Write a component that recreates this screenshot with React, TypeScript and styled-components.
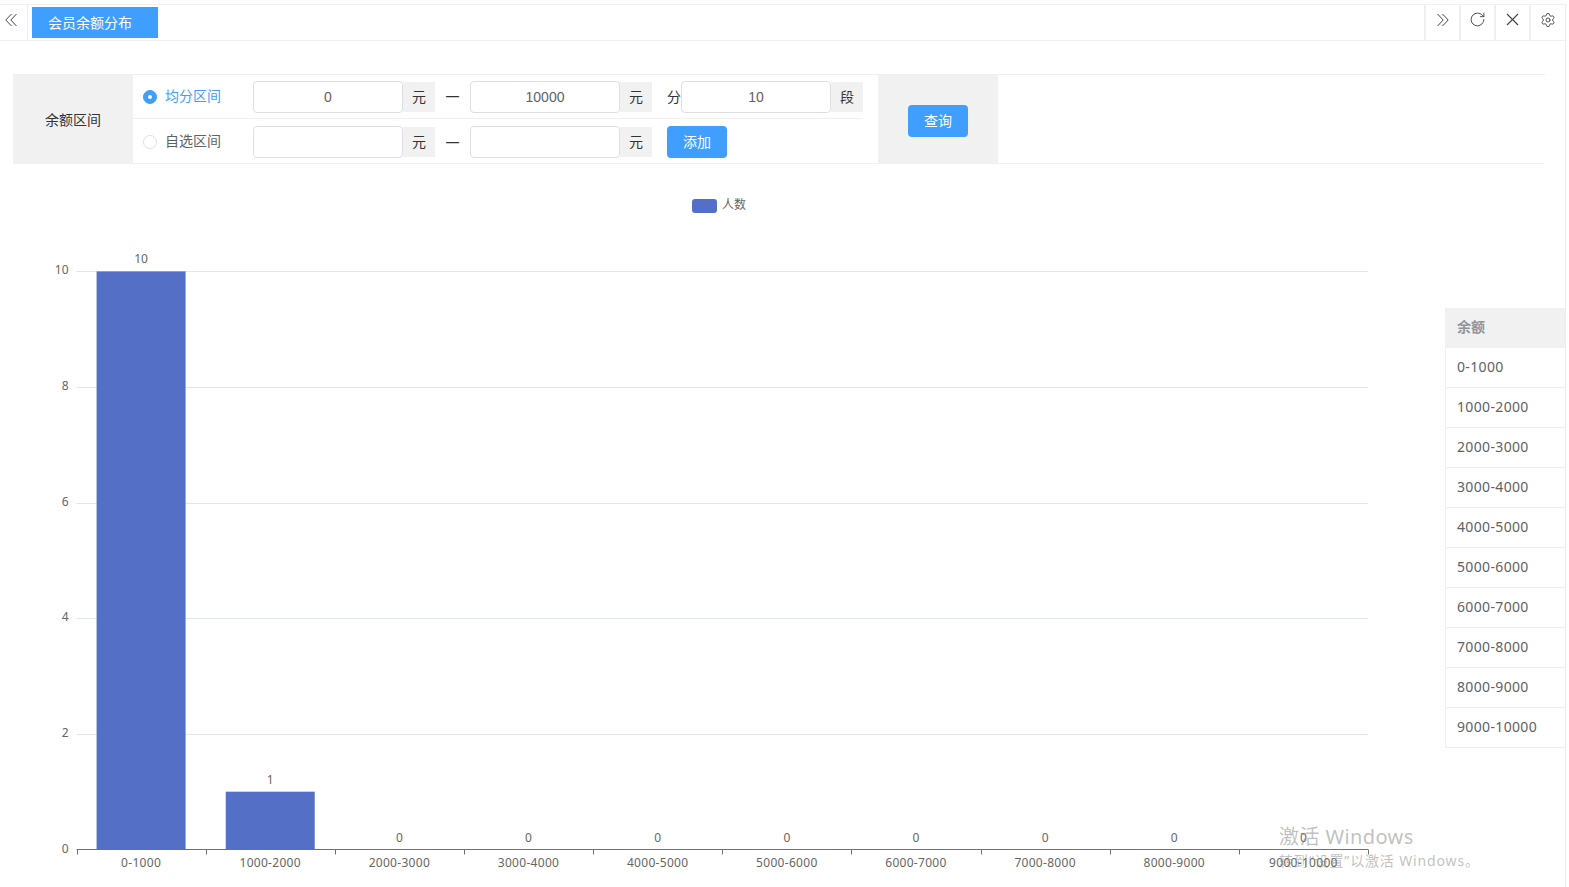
import React from 'react';
import styled, { createGlobalStyle } from 'styled-components';
import { RotateCw, X, Settings } from 'lucide-react';

const Global = createGlobalStyle`
  html, body { margin: 0; padding: 0; background: #fff; height: 100%; overflow: hidden; }
  * { box-sizing: border-box; }
  body { font-family: "Noto Sans", "Noto Sans CJK SC", "Liberation Sans", sans-serif; }
`;

const Page = styled.div`
  position: relative;
  width: 1569px;
  height: 887px;
  padding-top: 4px;
  overflow: hidden;
  background: #fff;
`;
const Inner = styled.div`
  width: 1566px;
  height: 883px;
  border-right: 1px solid #ececec;
  display: flex;
  flex-direction: column;
`;
const TabBar = styled.div`
  height: 37px;
  flex: none;
  display: flex;
  align-items: stretch;
  padding-right: 1px;
  border-top: 1px solid #f0f0f0;
  border-bottom: 1px solid #f0f0f0;
`;
const NavButton = styled.button`
  width: 35px;
  padding: 0 0 6px;
  border: 0;
  border-left: 2px solid #f0f0f0;
  background: #fff;
  color: #444;
  display: flex;
  align-items: center;
  justify-content: center;
`;
const BackButton = styled(NavButton)`
  width: 28px;
  padding-right: 5px;
  border-left: none;
  border-right: 1px solid #f0f0f0;
`;
const Tab = styled.div`
  margin: 2px 0 2px 4px;
  width: 126px;
  padding: 0 0 2px 16px;
  background: #409eff;
  color: #fff;
  font-size: 14px;
  display: flex;
  align-items: center;
`;
const Spacer = styled.div`
  flex: 1;
`;
const FilterTable = styled.div`
  margin: 33px 20px 0 13px;
  height: 90px;
  flex: none;
  display: flex;
  border-top: 1px solid #f0f0f0;
  border-bottom: 1px solid #f0f0f0;
  color: #333;
  font-size: 14px;
`;
const LabelCell = styled.div`
  width: 120px;
  background: #f1f1f1;
  display: flex;
  align-items: center;
  justify-content: center;
`;
const Rows = styled.div`
  width: 730px;
  display: flex;
  flex-direction: column;
`;
const Row = styled.div<{ $first?: boolean }>`
  height: 44px;
  padding-top: ${(p) => (p.$first ? 0 : 2)}px;
  display: flex;
  align-items: center;
  border-bottom: ${(p) => (p.$first ? '1px solid #f0f0f0' : 'none')};
`;
const Radio = styled.label<{ $on?: boolean }>`
  width: 120px;
  padding-left: 10px;
  display: flex;
  align-items: center;
  gap: 8px;
  font-size: 14px;
  color: ${(p) => (p.$on ? '#409eff' : '#606266')};
`;
const RadioText = styled.span`
  margin-bottom: 4px;
`;
const Dot = styled.span<{ $on?: boolean }>`
  width: 14px;
  height: 14px;
  border-radius: 50%;
  flex: none;
  background: ${(p) => (p.$on ? '#409eff' : '#fff')};
  border: 1px solid ${(p) => (p.$on ? '#409eff' : '#dcdfe6')};
  display: flex;
  align-items: center;
  justify-content: center;
  &::after {
    content: '';
    width: 4px;
    height: 4px;
    border-radius: 50%;
    background: ${(p) => (p.$on ? '#fff' : 'transparent')};
  }
`;
const Field = styled.div`
  width: 150px;
  height: 32px;
  flex: none;
  border: 1px solid #dcdfe6;
  border-radius: 4px;
  background: #fff;
  color: #606266;
  font-family: "Liberation Sans", sans-serif;
  font-size: 14px;
  display: flex;
  align-items: center;
  justify-content: center;
`;
const Suffix = styled.div`
  width: 32px;
  height: 30px;
  flex: none;
  padding-bottom: 2px;
  background: #f1f1f1;
  display: flex;
  align-items: center;
  justify-content: center;
  color: #333;
`;
const Dash = styled.div`
  width: 35px;
  flex: none;
  text-align: center;
  color: #333;
  margin-top: -2px;
`;
const Fen = styled.div`
  width: 14px;
  margin-left: 15px;
  flex: none;
  margin-top: -1px;
  color: #333;
`;
const ActionBtn = styled.button<{ $gap?: number }>`
  width: 60px;
  height: 32px;
  flex: none;
  margin-left: ${(p) => p.$gap ?? 0}px;
  padding: 0 0 2px;
  border: 0;
  border-radius: 4px;
  background: #409eff;
  color: #fff;
  font: inherit;
  font-size: 14px;
`;
const ActionCell = styled.div`
  width: 120px;
  margin-left: 15px;
  background: #f1f1f1;
  display: flex;
  align-items: center;
  justify-content: center;
  padding-top: 3px;
`;
const Main = styled.div`
  flex: 1;
  display: flex;
  align-items: flex-start;
  min-height: 0;
`;
const Chart = styled.svg`
  display: block;
  flex: none;
  text {
    font-family: "Noto Sans", "Noto Sans CJK SC", sans-serif;
    font-size: 12px;
    fill: #666;
  }
`;
const AxisLabel = styled.text`
  letter-spacing: 0.3px;
`;
const SideTable = styled.div`
  width: 120px;
  flex: none;
  margin-top: 144px;
  border-left: 1px solid #f0f0f0;
  font-size: 14px;
  color: #606266;
`;
const SideHead = styled.div`
  height: 40px;
  padding: 0 0 4px 11px;
  background: #f1f1f1;
  color: #909399;
  font-weight: 700;
  font-size: 14px;
  display: flex;
  align-items: center;
`;
const SideRow = styled.div`
  height: 40px;
  padding: 0 0 2px 11px;
  border-bottom: 1px solid #ebeef5;
  letter-spacing: 0.35px;
  display: flex;
  align-items: center;
`;
const Watermark = styled.div`
  position: absolute;
  left: 1279px;
  top: 823px;
  color: rgba(130, 130, 130, 0.5);
  pointer-events: none;
`;
const WmTitle = styled.div`
  font-size: 20px;
  line-height: 27px;
  letter-spacing: 0.4px;
`;
const WmSub = styled.div`
  margin-top: 1px;
  font-size: 14px;
  line-height: 20px;
  letter-spacing: 0.85px;
`;

const labels = ['0-1000', '1000-2000', '2000-3000', '3000-4000', '4000-5000', '5000-6000', '6000-7000', '7000-8000', '8000-9000', '9000-10000'];
const values = [10, 1, 0, 0, 0, 0, 0, 0, 0, 0];
const X0 = 76.5;
const STEP = 129.15;
const TOP_OFFSET = 163;
const BASE = 848.5;
const UNIT = 57.81;

const Chevrons = ({ dir }: { dir: 'left' | 'right' }) => (
  <svg width="12" height="14" viewBox="0 0 12 14" fill="none" stroke="currentColor" strokeWidth="1">
    {dir === 'left' ? (
      <path d="M6.5 1 0.8 7 6.5 13M11.5 1 5.8 7 11.5 13" />
    ) : (
      <path d="M0.5 1 6.2 7 0.5 13M5.5 1 11.2 7 5.5 13" />
    )}
  </svg>
);

export default function App() {
  return (
    <Page>
      <Global />
      <Inner>
        <TabBar>
          <BackButton aria-label="back"><Chevrons dir="left" /></BackButton>
          <Tab>会员余额分布</Tab>
          <Spacer />
          <NavButton aria-label="forward"><Chevrons dir="right" /></NavButton>
          <NavButton aria-label="refresh"><RotateCw size={17} strokeWidth={1.3} /></NavButton>
          <NavButton aria-label="close"><X size={21} strokeWidth={1.3} /></NavButton>
          <NavButton aria-label="settings"><Settings size={16} strokeWidth={1.4} /></NavButton>
        </TabBar>
        <FilterTable>
          <LabelCell>余额区间</LabelCell>
          <Rows>
            <Row $first>
              <Radio $on><Dot $on /><RadioText>均分区间</RadioText></Radio>
              <Field>0</Field>
              <Suffix>元</Suffix>
              <Dash>—</Dash>
              <Field>10000</Field>
              <Suffix>元</Suffix>
              <Fen>分</Fen>
              <Field>10</Field>
              <Suffix>段</Suffix>
            </Row>
            <Row>
              <Radio><Dot /><RadioText>自选区间</RadioText></Radio>
              <Field />
              <Suffix>元</Suffix>
              <Dash>—</Dash>
              <Field />
              <Suffix>元</Suffix>
              <ActionBtn $gap={15}>添加</ActionBtn>
            </Row>
          </Rows>
          <ActionCell><ActionBtn>查询</ActionBtn></ActionCell>
        </FilterTable>
        <Main>
          <Chart width={1445} height={723} viewBox={`0 ${TOP_OFFSET} 1445 723`}>
            <rect x={692} y={198} width={25} height={14} rx={3} fill="#5470c6" />
            <text x={722} y={208}>人数</text>
            {[0, 2, 4, 6, 8, 10].map((v) => {
              const y = BASE - v * UNIT;
              return (
                <g key={v}>
                  {v > 0 && <line x1={X0} x2={1368} y1={Math.round(y) + 0.5} y2={Math.round(y) + 0.5} stroke="#e0e6f1" />}
                  <AxisLabel x={69} y={y + 3} textAnchor="end">{v}</AxisLabel>
                </g>
              );
            })}
            {values.map((v, i) => {
              const cx = X0 + STEP * (i + 0.5);
              const h = v * UNIT;
              return (
                <g key={labels[i]}>
                  {v > 0 && <rect x={cx - 44.5} y={BASE - h} width={89} height={h} fill="#5470c6" />}
                  <text x={cx} y={BASE - h - 8} textAnchor="middle">{v}</text>
                  <AxisLabel x={cx} y={866} textAnchor="middle">{labels[i]}</AxisLabel>
                </g>
              );
            })}
            <line x1={X0} x2={1368} y1={BASE} y2={BASE} stroke="#6e7079" />
            {Array.from({ length: 11 }, (_, i) => {
              const x = Math.round(X0 + STEP * i) + 0.5;
              return <line key={i} x1={x} x2={x} y1={BASE} y2={BASE + 5} stroke="#6e7079" />;
            })}
          </Chart>
          <SideTable>
            <SideHead>余额</SideHead>
            {labels.map((l) => <SideRow key={l}>{l}</SideRow>)}
          </SideTable>
        </Main>
      </Inner>
      <Watermark>
        <WmTitle>激活 Windows</WmTitle>
        <WmSub>转到“设置”以激活 Windows。</WmSub>
      </Watermark>
    </Page>
  );
}
